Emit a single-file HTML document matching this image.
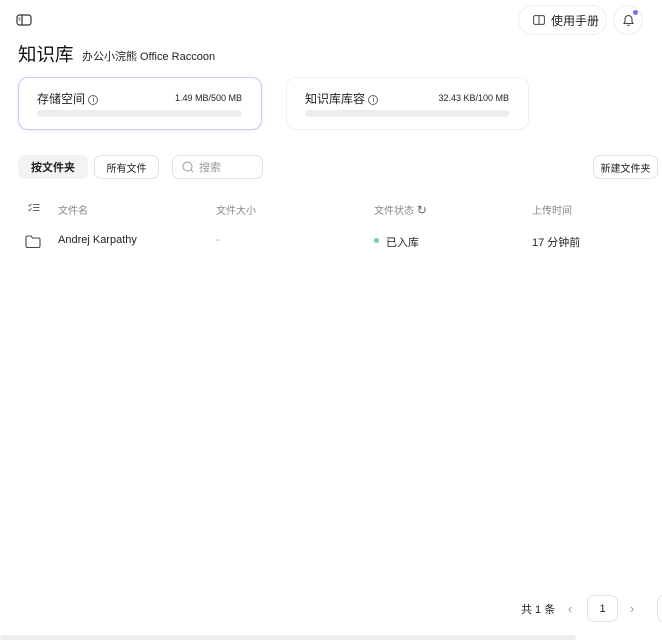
<!DOCTYPE html>
<html><head><meta charset="utf-8"><style>
*{box-sizing:border-box;margin:0;padding:0}
body{width:662px;height:642px;background:#fff;position:relative;overflow:hidden;font-family:"Liberation Sans","Noto Sans CJK SC",sans-serif;color:#222}
.a{position:absolute}
.card{position:absolute;border-radius:10px;background:#fff}
.bar{position:absolute;height:7px;border-radius:4px;background:#ededed}
.btn{position:absolute;border:1px solid #e3e3e3;border-radius:7px;font-size:11px;display:flex;align-items:center;justify-content:center;background:#fff}
.th{position:absolute;top:202px;font-size:10px;color:#888}
</style></head><body>
<svg class="a" style="left:16px;top:14px" width="16" height="12" viewBox="0 0 16 12"><rect x="1" y="1" width="14" height="10" rx="2.5" fill="none" stroke="#333" stroke-width="1.2"/><line x1="6" y1="1" x2="6" y2="11" stroke="#333" stroke-width="1.2"/><line x1="2.8" y1="4" x2="4.3" y2="4" stroke="#333"/><line x1="2.8" y1="6" x2="4.3" y2="6" stroke="#333"/></svg>
<div class="a" style="left:518px;top:5px;width:89px;height:30px;border:1px solid #eee;border-radius:15px;font-size:12px;display:flex;align-items:center;padding-left:14px;gap:6px"><svg width="12" height="10" viewBox="0 0 12 10"><rect x="0.6" y="0.6" width="10.8" height="8.8" rx="1.5" fill="none" stroke="#444"/><line x1="6" y1="1" x2="6" y2="9" stroke="#444"/></svg>使用手册</div>
<div class="a" style="left:613px;top:5px;width:30px;height:30px;border:1px solid #eee;border-radius:15px"><svg class="a" style="left:8px;top:7px" width="13" height="14" viewBox="0 0 13 14"><path d="M3 9V6a3.5 3.5 0 0 1 7 0v3l1 1.5H2z" fill="none" stroke="#444" stroke-width="1.1"/><path d="M5.2 12.3h2.6" stroke="#444"/></svg><div class="a" style="left:19px;top:4px;width:5px;height:5px;border-radius:3px;background:#7a6ee8"></div></div>
<div class="a" style="left:18px;top:41px;font-size:18.5px;color:#111">知识库</div>
<div class="a" style="left:82px;top:48px;font-size:11px;color:#222">办公小浣熊 Office Raccoon</div>
<div class="card" style="left:18px;top:77px;width:244px;height:53px;border:1px solid #cfc8ea;box-shadow:0 1px 3px rgba(120,100,200,.12)"></div>
<div class="a" style="left:37px;top:90px;font-size:12px">存储空间 <span style="display:inline-block;width:10px;height:10px;border:1px solid #666;border-radius:50%;font-size:7px;text-align:center;line-height:9px;vertical-align:1px">i</span></div>
<div class="a" style="left:160px;top:93px;width:82px;text-align:right;font-size:9px">1.49 MB/500 MB</div>
<div class="bar" style="left:37px;top:110px;width:205px"></div>
<div class="card" style="left:286px;top:77px;width:243px;height:53px;border:1px solid #f0f0f0"></div>
<div class="a" style="left:305px;top:90px;font-size:12px">知识库库容 <span style="display:inline-block;width:10px;height:10px;border:1px solid #666;border-radius:50%;font-size:7px;text-align:center;line-height:9px;vertical-align:1px">i</span></div>
<div class="a" style="left:420px;top:93px;width:89px;text-align:right;font-size:9px">32.43 KB/100 MB</div>
<div class="bar" style="left:305px;top:110px;width:204px"></div>
<div class="btn" style="left:18px;top:155px;width:70px;height:24px;background:#f3f3f3;border-color:#f3f3f3;font-weight:bold">按文件夹</div>
<div class="btn" style="left:94px;top:155px;width:65px;height:24px;font-size:10px">所有文件</div>
<div class="btn" style="left:172px;top:155px;width:91px;height:24px;justify-content:flex-start;padding-left:9px;color:#999;gap:5px"><svg width="12" height="12" viewBox="0 0 12 12"><circle cx="5.5" cy="5.5" r="4.5" fill="none" stroke="#999"/><line x1="9" y1="9" x2="11" y2="11" stroke="#999"/></svg>搜索</div>
<div class="btn" style="left:593px;top:155px;width:65px;height:24px;font-size:10px">新建文件夹</div>
<svg class="a" style="left:28px;top:203px" width="12" height="9" viewBox="0 0 12 9"><path d="M0.5 2l1 1.2 2-2.4M0.5 6.5l1 1.2 2-2.4" fill="none" stroke="#666" stroke-width="0.9"/><path d="M5 1.5h6.5M5 4.5h6.5M5 7.5h6.5" stroke="#666" stroke-width="0.9"/></svg>
<div class="th" style="left:58px">文件名</div>
<div class="th" style="left:216px">文件大小</div>
<div class="th" style="left:374px">文件状态 <span style="color:#666;font-size:12px">↻</span></div>
<div class="th" style="left:532px">上传时间</div>
<svg class="a" style="left:25px;top:235px" width="16" height="13" viewBox="0 0 16 13"><path d="M1 2.5a1.5 1.5 0 0 1 1.5-1.5h3.5l1.5 2h6a1.5 1.5 0 0 1 1.5 1.5v6.5a1.5 1.5 0 0 1-1.5 1.5h-11a1.5 1.5 0 0 1-1.5-1.5z" fill="none" stroke="#444" stroke-width="1.1"/></svg>
<div class="a" style="left:58px;top:234px;font-size:11px">Andrej Karpathy</div>
<div class="a" style="left:216px;top:234px;font-size:11px;color:#999">-</div>
<div class="a" style="left:374px;top:238px;width:5px;height:5px;border-radius:3px;background:#6fcfa8"></div>
<div class="a" style="left:386px;top:234px;font-size:11px">已入库</div>
<div class="a" style="left:532px;top:234px;font-size:11px">17 分钟前</div>
<div class="a" style="left:521px;top:601px;font-size:11px">共 1 条</div>
<div class="a" style="left:568px;top:601px;font-size:13px;color:#999">‹</div>
<div class="btn" style="left:587px;top:595px;width:31px;height:27px">1</div>
<div class="a" style="left:630px;top:601px;font-size:13px;color:#999">›</div>
<div class="btn" style="left:657px;top:595px;width:20px;height:27px"></div>
<div class="a" style="left:0;top:635px;width:576px;height:5px;background:#eee;border-radius:3px"></div>
</body></html>
